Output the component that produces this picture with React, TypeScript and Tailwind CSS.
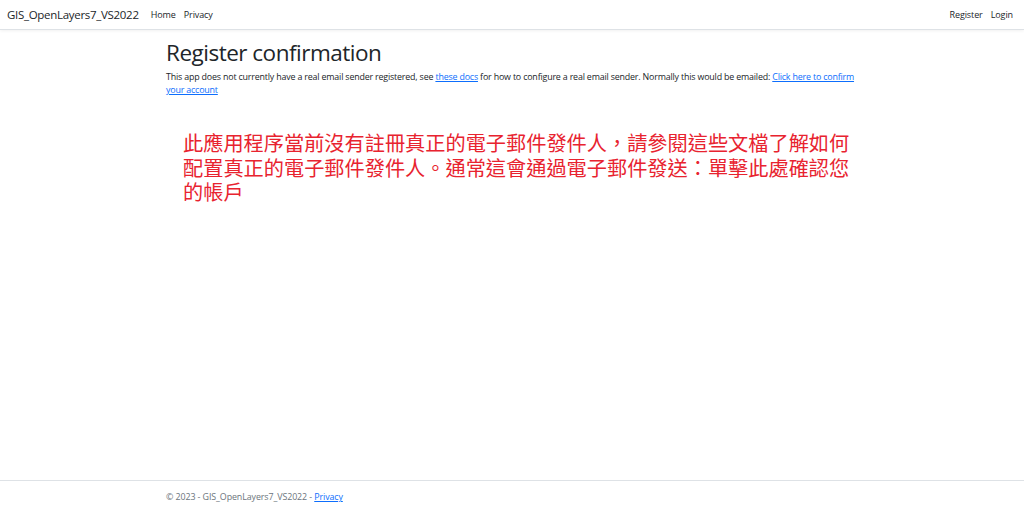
import React from 'react'

const sans = { fontFamily: '"Segoe UI", "Open Sans", "Noto Sans", sans-serif' }

export default function App() {
  return (
    <div className="flex min-h-[509px] flex-col bg-white text-[#212529]" style={sans}>
      {/* Navbar */}
      <nav className="flex h-[30px] items-center border-b border-[#dee2e6] bg-white px-[7px] shadow-[0_1px_3px_rgba(0,0,0,0.06)]">
        <span className="mr-[12px] text-[11.5px] tracking-[-0.3px] text-[#212529]">GIS_OpenLayers7_VS2022</span>
        <div className="flex gap-[8px] text-[9px] tracking-[-0.1px] text-[#212529]">
          <a>Home</a>
          <a>Privacy</a>
        </div>
        <div className="ml-auto flex gap-[8px] pr-[4px] text-[9px] tracking-[-0.1px] text-[#212529]">
          <a>Register</a>
          <a>Login</a>
        </div>
      </nav>

      {/* Main */}
      <main className="mx-auto w-[692px] flex-1">
        <h1 className="mt-[8px] text-[22.5px] leading-[30px] font-normal tracking-[-0.5px]">Register confirmation</h1>
        <p className="mt-[2px] text-[8.9px] leading-[13px] tracking-[-0.18px]">
          This app does not currently have a real email sender registered, see{' '}
          <a className="text-[#0d6efd] underline">these docs</a> for how to configure a real email sender.
          Normally this would be emailed:{' '}
          <a className="text-[#0d6efd] underline">Click here to confirm your account</a>
        </p>
        <p
          className="mt-[36px] ml-[17px] text-[20.2px] leading-[24.5px] text-[#e8232f]"
          style={{ fontFamily: '"Liberation Serif", "Noto Sans CJK TC", serif' }}
        >
          此應用程序當前沒有註冊真正的電子郵件發件人，請參閱這些文檔了解如何配置真正的電子郵件發件人。通常這會通過電子郵件發送：單擊此處確認您的帳戶
        </p>
      </main>

      {/* Footer */}
      <footer className="h-[29px] border-t border-[#dee2e6]">
        <div className="mx-auto w-[692px] pt-[9px] text-[8.9px] tracking-[-0.1px] text-[#6c757d]">
          © 2023 - GIS_OpenLayers7_VS2022 - <a className="text-[#0d6efd] underline">Privacy</a>
        </div>
      </footer>
    </div>
  )
}
